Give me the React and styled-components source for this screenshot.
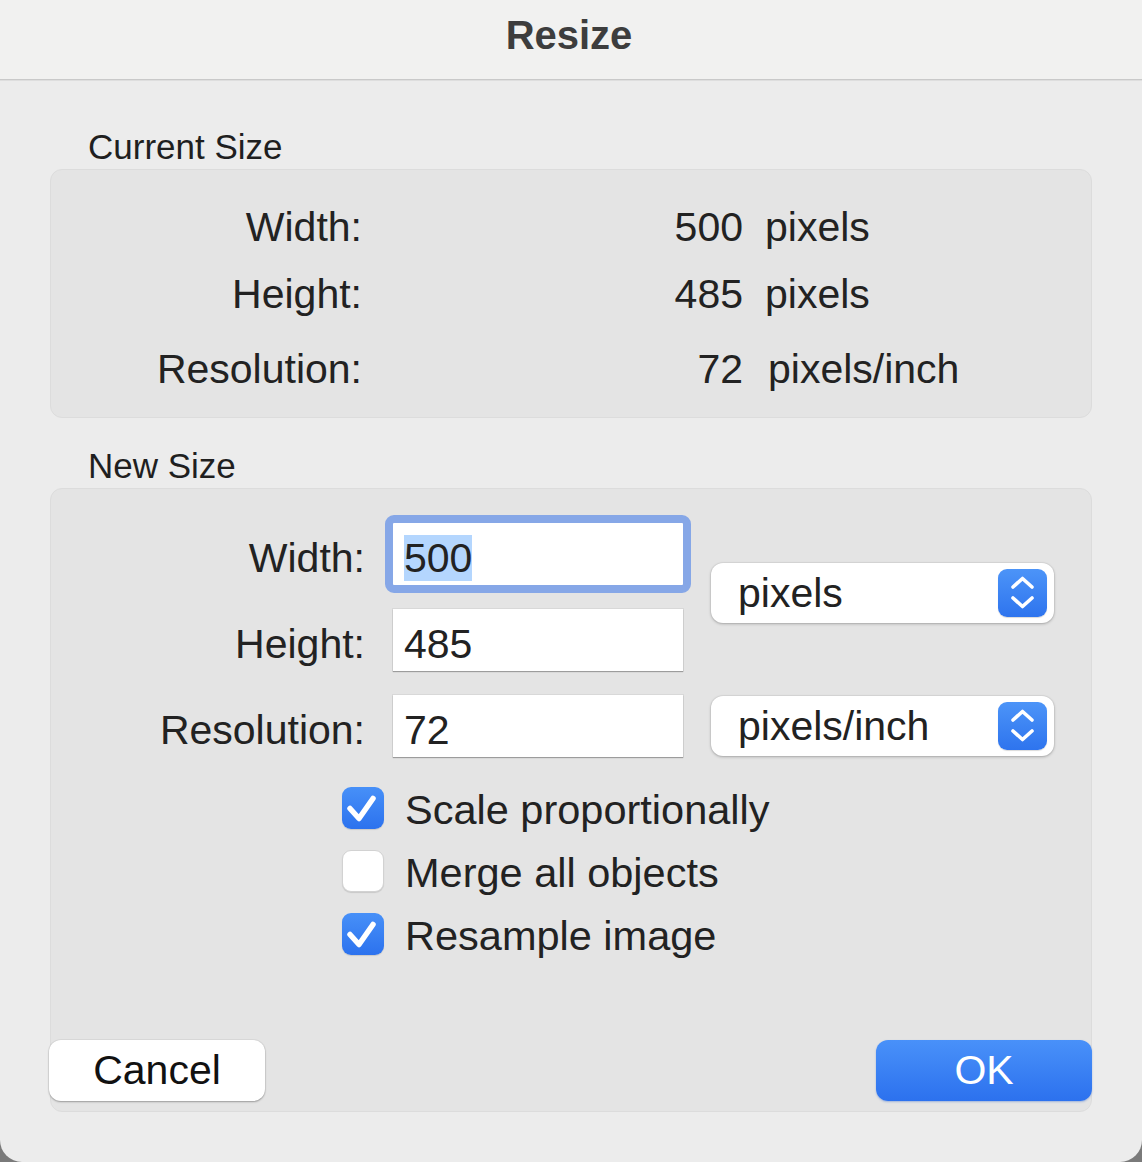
import { Fragment } from 'react';
import styled, { createGlobalStyle } from 'styled-components';

const GlobalStyle = createGlobalStyle`
  html, body {
    margin: 0;
    padding: 0;
    background: #7a7a7a;
  }
  body {
    font-family: "Liberation Sans", Arial, sans-serif;
    color: #222222;
    -webkit-font-smoothing: antialiased;
  }
`;

const Window = styled.div`
  width: 1142px;
  height: 1162px;
  display: flex;
  flex-direction: column;
  background: #ececec;
  border-radius: 0 0 22px 22px;
  overflow: hidden;
`;

const TitleBar = styled.div`
  height: 80px;
  flex-shrink: 0;
  box-sizing: border-box;
  padding-top: 12px;
  text-align: center;
  background: #f1f1f0;
  border-bottom: 1px solid #c9c9c9;
  box-shadow: 0 1px 0 #dedede;
`;

const Title = styled.h1`
  margin: 0 0 0 -4px;
  font-size: 40px;
  line-height: 46px;
  font-weight: 700;
  color: #3d3d3d;
`;

const Content = styled.div`
  flex: 1;
  display: flex;
  flex-direction: column;
  padding: 47px 50px 50px;
`;

const SectionLabel = styled.div`
  font-size: 35px;
  line-height: 40px;
  padding-left: 38px;
  margin-top: ${(p) => p.$gap || 0}px;
  margin-bottom: 2px;
  color: #1f1f1f;
`;

const Panel = styled.div`
  background: #e4e4e4;
  border: 1px solid #dcdcdc;
  border-radius: 12px;
  box-sizing: border-box;
  ${(p) => p.$grow && 'flex: 1; display: flex; flex-direction: column;'}
`;

const InfoGrid = styled.div`
  display: grid;
  grid-template-columns: 311px 381px 1fr;
  padding: 33px 0 24px;
  row-gap: 19px;
  font-size: 41px;
  line-height: 48px;
`;

const InfoLabel = styled.div`
  text-align: right;
  margin-top: ${(p) => (p.$extra ? 8 : 0)}px;
`;

const InfoValue = styled.div`
  text-align: right;
  margin-top: ${(p) => (p.$extra ? 8 : 0)}px;
`;

const InfoUnit = styled.div`
  padding-left: ${(p) => (p.$extra ? 25 : 22)}px;
  margin-top: ${(p) => (p.$extra ? 8 : 0)}px;
`;

const FormGrid = styled.div`
  display: grid;
  grid-template-columns: 314px 290px 343px;
  grid-template-rows: 62px 62px 62px;
  column-gap: 28px;
  row-gap: 24px;
  padding-top: 34px;
  font-size: 41px;
`;

const FieldLabel = styled.div`
  grid-column: 1;
  grid-row: ${(p) => p.$row};
  text-align: right;
  padding-top: 11px;
  line-height: 48px;
`;

const Field = styled.div`
  grid-column: 2;
  grid-row: ${(p) => p.$row};
  position: relative;
  background: #ffffff;
  box-sizing: border-box;
  padding: 11px 0 0 11px;
  line-height: 48px;
  box-shadow: 0 1px 1px rgba(0, 0, 0, 0.28), 0 0 0 1px rgba(0, 0, 0, 0.05);

  ${(p) =>
    p.$focused &&
    `
    box-shadow: none;
    &::before {
      content: '';
      position: absolute;
      inset: -8px;
      border: 8px solid #86a7e7;
      border-radius: 9px;
      pointer-events: none;
    }
  `}
`;

const Selected = styled.span`
  background: #b4d6fe;
`;

const Popup = styled.div`
  grid-column: 3;
  grid-row: ${(p) => p.$rows};
  align-self: center;
  height: 60px;
  margin-bottom: ${(p) => p.$lift || 0}px;
  display: flex;
  align-items: center;
  justify-content: space-between;
  padding: 0 7px 0 27px;
  background: #ffffff;
  border-radius: 12px;
  box-shadow: 0 1px 3px rgba(0, 0, 0, 0.25), 0 0 0 1px rgba(0, 0, 0, 0.04);
  font-size: 41px;
`;

const Stepper = styled.div`
  width: 49px;
  height: 48px;
  border-radius: 9px;
  background: linear-gradient(#4c94f8, #2e74ee);
  display: flex;
  box-shadow: 0 1px 1px rgba(0, 0, 0, 0.15);
`;

const Checks = styled.div`
  display: flex;
  flex-direction: column;
  gap: 21px;
  margin: 30px 0 0 291px;
`;

const CheckRow = styled.label`
  display: flex;
  align-items: center;
  gap: 21px;
  height: 42px;
  font-size: 41.5px;
  line-height: 42px;
`;

const Box = styled.span`
  width: 42px;
  height: 42px;
  flex-shrink: 0;
  border-radius: 9px;
  box-sizing: border-box;
  display: flex;
  background: ${(p) => (p.$checked ? 'linear-gradient(#4790f8, #2c72ee)' : '#ffffff')};
  border: ${(p) => (p.$checked ? 'none' : '1px solid #d2d2d2')};
  box-shadow: 0 1px 1px rgba(0, 0, 0, 0.12);
`;

const CheckText = styled.span`
  padding-top: 3px;
`;

const Buttons = styled.div`
  margin-top: auto;
  display: flex;
  justify-content: space-between;
  padding-bottom: 10px;
`;

const Button = styled.button`
  width: 216px;
  height: 61px;
  border: none;
  border-radius: 12px;
  font-family: inherit;
  font-size: 41px;
  padding: 0;
  margin: ${(p) => (p.$primary ? '0 -1px 0 0' : '0 0 0 -2px')};
  color: ${(p) => (p.$primary ? '#ffffff' : '#111111')};
  background: ${(p) => (p.$primary ? 'linear-gradient(#4991f9, #2c71ee)' : '#ffffff')};
  box-shadow: ${(p) =>
    p.$primary
      ? '0 1px 2px rgba(30, 90, 200, 0.35)'
      : '0 1px 2px rgba(0, 0, 0, 0.3), 0 0 0 1px rgba(0, 0, 0, 0.04)'};
`;

function Chevrons() {
  return (
    <svg width="49" height="48" viewBox="0 0 49 48">
      <g fill="none" stroke="#ffffff" strokeWidth="3.6" strokeLinecap="round" strokeLinejoin="round">
        <path d="M15 18 L24.5 9.5 L34 18" />
        <path d="M15 29 L24.5 37.5 L34 29" />
      </g>
    </svg>
  );
}

function Checkbox({ checked, label }) {
  return (
    <CheckRow>
      <Box $checked={checked}>
        {checked && (
          <svg width="42" height="42" viewBox="0 0 42 42">
            <path
              d="M8 21.5 L17 31.5 L31 11.5"
              fill="none"
              stroke="#ffffff"
              strokeWidth="5.5"
              strokeLinecap="round"
              strokeLinejoin="round"
            />
          </svg>
        )}
      </Box>
      <CheckText>{label}</CheckText>
    </CheckRow>
  );
}

const current = [
  { label: 'Width:', value: '500', unit: 'pixels' },
  { label: 'Height:', value: '485', unit: 'pixels' },
  { label: 'Resolution:', value: '72', unit: 'pixels/inch', extra: true },
];

export default function App() {
  return (
    <>
      <GlobalStyle />
      <Window>
        <TitleBar>
          <Title>Resize</Title>
        </TitleBar>
        <Content>
          <SectionLabel>Current Size</SectionLabel>
          <Panel>
            <InfoGrid>
              {current.map((row) => (
                <Fragment key={row.label}>
                  <InfoLabel $extra={row.extra}>{row.label}</InfoLabel>
                  <InfoValue $extra={row.extra}>{row.value}</InfoValue>
                  <InfoUnit $extra={row.extra}>{row.unit}</InfoUnit>
                </Fragment>
              ))}
            </InfoGrid>
          </Panel>

          <SectionLabel $gap={28}>New Size</SectionLabel>
          <Panel $grow>
            <FormGrid>
              <FieldLabel $row={1}>Width:</FieldLabel>
              <Field $row={1} $focused>
                <Selected>500</Selected>
              </Field>
              <Popup $rows="1 / 3" $lift={8}>
                <span>pixels</span>
                <Stepper>
                  <Chevrons />
                </Stepper>
              </Popup>
              <FieldLabel $row={2}>Height:</FieldLabel>
              <Field $row={2}>485</Field>
              <FieldLabel $row={3}>Resolution:</FieldLabel>
              <Field $row={3}>72</Field>
              <Popup $rows="3">
                <span>pixels/inch</span>
                <Stepper>
                  <Chevrons />
                </Stepper>
              </Popup>
            </FormGrid>

            <Checks>
              <Checkbox checked label="Scale proportionally" />
              <Checkbox label="Merge all objects" />
              <Checkbox checked label="Resample image" />
            </Checks>

            <Buttons>
              <Button>Cancel</Button>
              <Button $primary>OK</Button>
            </Buttons>
          </Panel>
        </Content>
      </Window>
    </>
  );
}
